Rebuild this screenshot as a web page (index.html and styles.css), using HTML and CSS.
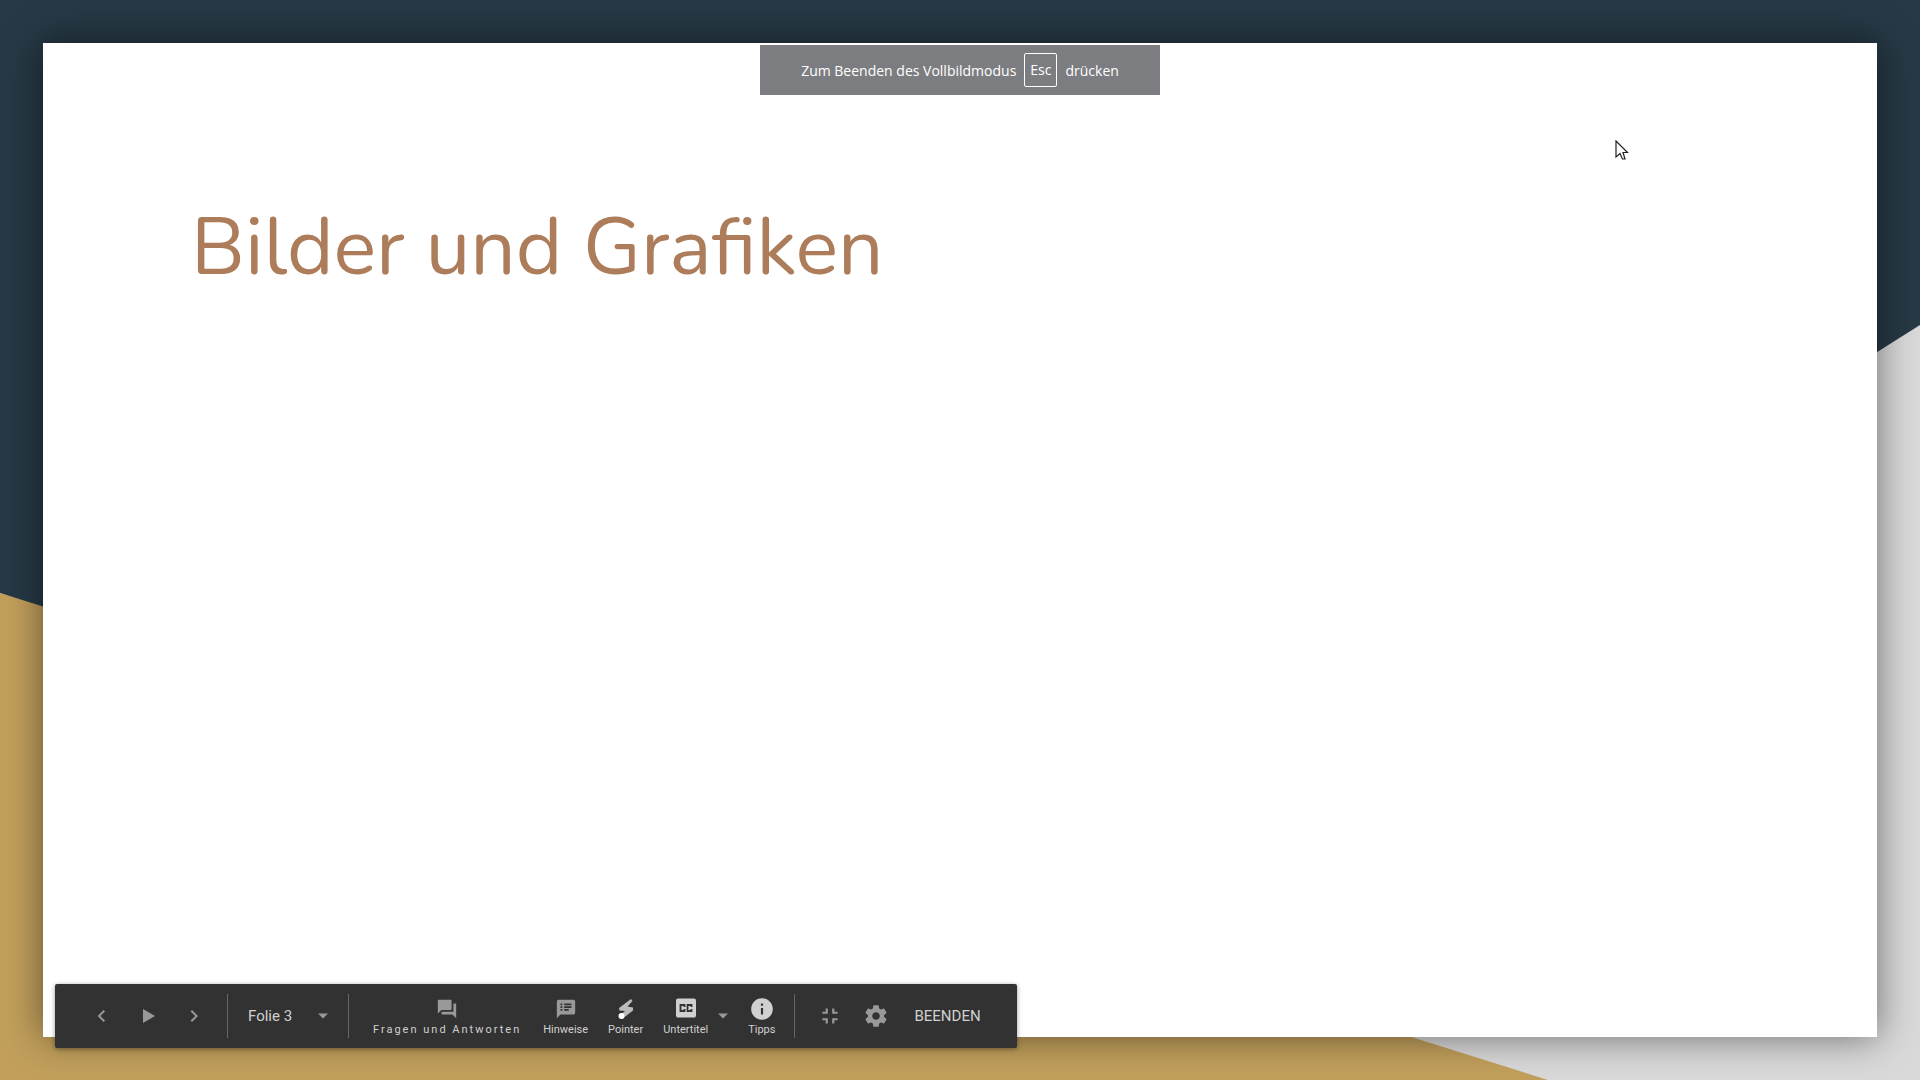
FILE: index.html
```html
<!DOCTYPE html>
<html lang="de">
<head>
<meta charset="utf-8">
<title>Bilder und Grafiken</title>
<link rel="stylesheet" href="styles.css">
</head>
<body>
<div class="stage">
  <svg class="backdrop" viewBox="0 0 1920 1080" preserveAspectRatio="none" aria-hidden="true">
    <path fill="#263945" d="M0 0H1920V325L960 930L0 593Z"/>
    <path fill="#c2a05c" d="M0 593L1548 1080H0Z"/>
  </svg>

  <main class="slide">
    <h1 class="slide-title">Bilder und Grafiken</h1>
  </main>

  <div class="notice" role="status">
    <span>Zum Beenden des Vollbildmodus</span>
    <kbd class="key">Esc</kbd>
    <span>drücken</span>
  </div>

  <nav class="toolbar" aria-label="Präsentation">
    <button class="icon-button" aria-label="Zurück"><svg width="24" height="24" viewBox="0 0 24 24"><path d="M15 7.4L13.6 6l-6 6 6 6 1.4-1.4L10.400 12z"/></svg></button>
    <button class="icon-button" aria-label="Wiedergabe"><svg width="24" height="24" viewBox="0 0 24 24"><path d="M7 5v14l12-7z"/></svg></button>
    <button class="icon-button" aria-label="Weiter"><svg width="24" height="24" viewBox="0 0 24 24"><path d="M10 6L8.600 7.400 13.200 12l-4.600 4.600L10 18l6-6z"/></svg></button>
    <span class="divider"></span>
    <button class="slide-picker">Folie 3<svg width="10" height="6" viewBox="0 0 10 6"><path d="M0 0.500h10L5 5.500z"/></svg></button>
    <span class="divider"></span>
    <div class="tools">
      <button class="tool tool-wide">
        <svg width="22" height="22" viewBox="0 0 24 24"><path d="M21 6h-2v9H6v2c0 .55.45 1 1 1h11l4 4V7c0-.55-.45-1-1-1zm-4 6V3c0-.55-.45-1-1-1H3c-.55 0-1 .45-1 1v14l4-4h10c.55 0 1-.45 1-1z"/></svg>
        <span>Fragen und Antworten</span>
      </button>
      <button class="tool">
        <svg width="22" height="22" viewBox="0 0 24 24"><path d="M20 2H4c-1.100 0-2 .9-2 2v18l4-4h14c1.100 0 2-.9 2-2V4c0-1.100-.9-2-2-2zM8 14H6v-2h2v2zm0-3H6V9h2v2zm0-3H6V6h2v2zm7 6h-5v-2h5v2zm3-3h-8V9h8v2zm0-3h-8V6h8v2z"/></svg>
        <span>Hinweise</span>
      </button>
      <button class="tool">
        <svg width="22" height="22" viewBox="0 0 22 22"><path fill="#bbb" d="M16 1L4 10l.5 2.500 5.500.5-6 5 3 3L18 12.500v-3L12.500 8.500 17.500 3z"/><circle cx="6.500" cy="18" r="3" fill="#fff"/></svg>
        <span>Pointer</span>
      </button>
      <button class="tool tool-bright">
        <svg width="24" height="24" viewBox="0 0 24 24"><rect x="2" y="2.500" width="20" height="19" rx="2"/><path d="M10.500 11V9H6.500v6H10.500v-2M17.500 11V9h-4v6H17.500v-2" fill="none" stroke="#323232" stroke-width="1.800"/></svg>
        <span>Untertitel</span>
      </button>
      <button class="caption-menu" aria-label="Untertiteloptionen"><svg width="10" height="6" viewBox="0 0 10 6"><path d="M0 0.500h10L5 5.500z"/></svg></button>
      <button class="tool tool-bright">
        <svg width="26" height="26" viewBox="0 0 24 24"><path d="M12 2C6.480 2 2 6.480 2 12s4.480 10 10 10 10-4.480 10-10S17.520 2 12 2zm1 15h-2v-6h2v6zm0-8h-2V7h2v2z"/></svg>
        <span>Tipps</span>
      </button>
    </div>
    <span class="divider"></span>
    <button class="icon-button icon-first" aria-label="Vollbild beenden"><svg width="26" height="26" viewBox="0 0 24 24"><path d="M5 16h3v3h2v-5H5v2zm3-8H5v2h5V5H8v3zm6 11h2v-3h3v-2h-5v5zm2-11V5h-2v5h5V8h-3z"/></svg></button>
    <button class="icon-button" aria-label="Einstellungen"><svg width="26" height="26" viewBox="0 0 24 24"><path d="M19.430 12.980c.04-.32.07-.64.07-.98s-.03-.66-.07-.98l2.110-1.650c.19-.15.24-.42.12-.64l-2-3.460c-.12-.22-.39-.3-.61-.22l-2.490 1c-.52-.4-1.080-.73-1.690-.98l-.38-2.650C14.460 2.180 14.250 2 14 2h-4c-.25 0-.46.18-.49.42l-.38 2.650c-.61.25-1.170.59-1.690.98l-2.490-1c-.23-.09-.49 0-.61.22l-2 3.460c-.13.22-.07.49.12.64l2.110 1.650c-.04.32-.07.65-.07.98s.03.66.07.98l-2.110 1.650c-.19.15-.24.42-.12.64l2 3.460c.12.22.39.3.61.22l2.490-1c.52.4 1.080.73 1.690.98l.38 2.650c.03.24.24.42.49.42h4c.25 0 .46-.18.49-.42l.38-2.650c.61-.25 1.170-.59 1.690-.98l2.490 1c.23.09.49 0 .61-.22l2-3.460c.12-.22.07-.49-.12-.64l-2.110-1.650zM12 15.500c-1.930 0-3.500-1.570-3.500-3.500s1.570-3.500 3.500-3.500 3.500 1.570 3.500 3.500-1.570 3.500-3.500 3.500z"/></svg></button>
    <button class="exit-button">BEENDEN</button>
  </nav>

  <svg class="cursor" width="14" height="21" viewBox="0 0 14 21" aria-hidden="true"><path d="M1 1V17L5 13.500L7.500 19H10L8 12.500H12.500Z" fill="#fff" stroke="#222" stroke-width="1.200"/></svg>
</div>
</body>
</html>
```
FILE: styles.css
```css
* {
  box-sizing: border-box;
}

body {
  margin: 0;
  font-family: Roboto, "Liberation Sans", sans-serif;
}

.stage {
  position: relative;
  display: flex;
  min-height: 100vh;
  padding: 43px;
  background: #d9d9d9;
  overflow: hidden;
}

.backdrop {
  position: absolute;
  inset: 0;
  width: 100%;
  height: 100%;
}

.slide {
  position: relative;
  flex: 1;
  padding: 153px 148px;
  background: #fff;
  box-shadow: 0 0 36px rgba(0, 0, 0, 0.5);
}

.slide-title {
  margin: 0;
  color: #ad7d5b;
  font-family: Nunito, "Open Sans", sans-serif;
  font-size: 80px;
  font-weight: 400;
  line-height: 104px;
}

.notice {
  position: absolute;
  top: 45px;
  left: calc(50% - 200px);
  width: 400px;
  height: 50px;
  display: flex;
  align-items: center;
  justify-content: center;
  gap: 8px;
  background: #7c7d80;
  color: #fff;
  font-family: "Segoe UI", "Open Sans", sans-serif;
  font-size: 14px;
}

.key {
  padding: 0 5px;
  border: 1px solid #fff;
  border-radius: 2px;
  font-family: inherit;
  font-size: 14px;
  line-height: 32px;
}

.toolbar {
  position: absolute;
  left: 55px;
  bottom: 32px;
  height: 64px;
  display: flex;
  align-items: center;
  padding: 0 36px 0 24px;
  border-radius: 2px;
  background: #323232;
  box-shadow: 0 1px 5px rgba(0, 0, 0, 0.4);
}

.toolbar button {
  padding: 0;
  border: 0;
  background: none;
  color: #d0d0d0;
  font-family: inherit;
  white-space: nowrap;
}

.toolbar svg {
  display: block;
  fill: #999;
}

.toolbar .icon-button {
  display: flex;
  justify-content: center;
  width: 46px;
}

.divider {
  width: 1px;
  height: 44px;
  background: #666;
}

.icon-button + .divider {
  margin-left: 10px;
}

.toolbar .slide-picker {
  display: flex;
  align-items: center;
  justify-content: space-between;
  width: 120px;
  padding: 0 20px;
  font-size: 15px;
}

.tools {
  display: flex;
  align-items: center;
  gap: 20px;
  padding: 0 19px 0 22px;
}

.toolbar .tool {
  display: flex;
  flex-direction: column;
  align-items: center;
  padding-top: 2px;
  font-size: 11px;
  line-height: 16px;
}

.tool svg {
  margin: 0 0 2px;
}

.tool svg[height="22"] {
  margin: 2px 0;
}

.tool svg[height="26"] {
  margin: 0;
}

.toolbar .tool-wide {
  padding: 2px 2px 0;
  letter-spacing: 2px;
}

.toolbar .tool-bright svg {
  fill: #d0d0d0;
}

.toolbar .caption-menu {
  margin: 0 0 0 -10px;
}

.toolbar .icon-first {
  margin-left: 12px;
}

.toolbar .exit-button {
  margin-left: 15px;
  font-size: 15px;
}

.cursor {
  position: absolute;
  top: 140px;
  left: calc(100% - 305px);
}
```
